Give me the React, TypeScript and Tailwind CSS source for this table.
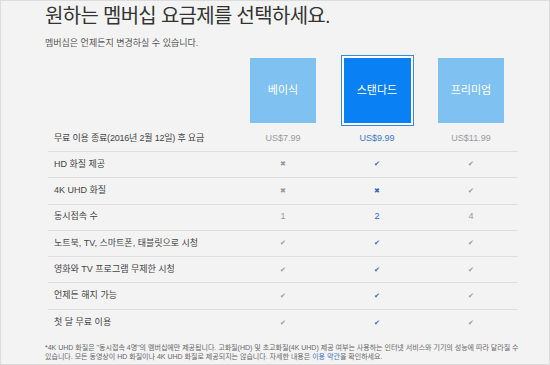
import React from "react";

type Cell = string | { icon: "check" | "x" };

const rows: { label: string; cells: Cell[] }[] = [
  { label: "HD 화질 제공", cells: [{ icon: "x" }, { icon: "check" }, { icon: "check" }] },
  { label: "4K UHD 화질", cells: [{ icon: "x" }, { icon: "x" }, { icon: "check" }] },
  { label: "동시접속 수", cells: ["1", "2", "4"] },
  { label: "노트북, TV, 스마트폰, 태블릿으로 시청", cells: [{ icon: "check" }, { icon: "check" }, { icon: "check" }] },
  { label: "영화와 TV 프로그램 무제한 시청", cells: [{ icon: "check" }, { icon: "check" }, { icon: "check" }] },
  { label: "언제든 해지 가능", cells: [{ icon: "check" }, { icon: "check" }, { icon: "check" }] },
  { label: "첫 달 무료 이용", cells: [{ icon: "check" }, { icon: "check" }, { icon: "check" }] },
];

function CellValue({ value, active }: { value: Cell; active: boolean }) {
  const color = active ? "text-[#3469b8]" : "text-[#999999]";
  if (typeof value === "string") {
    return <span className={`text-[9px] ${color}`}>{value}</span>;
  }
  return (
    <span className={`text-[7px] ${color}`}>{value.icon === "check" ? "✔" : "✖"}</span>
  );
}

export default function App() {
  return (
    <div
      className="w-[550px] h-[365px] overflow-hidden bg-[#f3f3f3] border border-[#dddddd] text-[#333]"
      style={{ fontFamily: '"Liberation Sans", "Noto Sans CJK KR", sans-serif' }}
    >
      <div className="pl-[44px] pt-[2px]">
        {/* Title */}
        <h1 className="text-[20px] leading-[26px] tracking-[-0.7px] text-[#333] font-normal">
          원하는 멤버십 요금제를 선택하세요.
        </h1>
        <p className="mt-[8px] text-[9px] leading-[12px] text-[#555]">
          멤버십은 언제든지 변경하실 수 있습니다.
        </p>

        {/* Plan table */}
        <div className="mt-[6px] ml-[3px] w-[470px]">
          <div className="flex h-[71px]">
            <div className="w-[188px]" />
            <div className="w-[94px] flex items-center justify-center">
              <div className="w-[66px] h-[65px] bg-[#7fc1f1] flex items-center justify-center text-white text-[11px]">
                베이식
              </div>
            </div>
            <div className="w-[94px] flex items-center justify-center">
              <div className="w-[73px] h-[71px] border border-[#3a8ad8] bg-white p-[2px]">
                <div className="w-full h-full bg-[#0a80f5] flex items-center justify-center text-white text-[11px]">
                  스탠다드
                </div>
              </div>
            </div>
            <div className="w-[94px] flex items-center justify-center">
              <div className="w-[66px] h-[65px] bg-[#7fc1f1] flex items-center justify-center text-white text-[11px]">
                프리미엄
              </div>
            </div>
          </div>

          {/* Price row */}
          <div className="flex h-[26px] items-center border-b border-[#dedede]">
            <div className="w-[188px] pl-[6px] text-[9px] tracking-[-0.2px] text-[#444]">무료 이용 종료(2016년 2월 12일) 후 요금</div>
            <div className="w-[94px] text-center text-[9px] text-[#9a9a9a]">US$7.99</div>
            <div className="w-[94px] text-center text-[9px] text-[#3d78c4]">US$9.99</div>
            <div className="w-[94px] text-center text-[9px] text-[#9a9a9a]">US$11.99</div>
          </div>

          {rows.map((row, i) => (
            <div
              key={row.label}
              className={`flex h-[26.3px] items-center ${i < rows.length - 1 ? "border-b border-[#dedede]" : ""}`}
            >
              <div className="w-[188px] pl-[6px] text-[9px] text-[#444]">{row.label}</div>
              {row.cells.map((c, j) => (
                <div key={j} className="w-[94px] flex justify-center">
                  <CellValue value={c} active={j === 1} />
                </div>
              ))}
            </div>
          ))}
        </div>

        {/* Footnote */}
        <p className="mt-[7px] text-[7px] leading-[9px] text-[#666] pr-[20px]">
          *4K UHD 화질은 "동시접속 4명"의 멤버십에만 제공됩니다. 고화질(HD) 및 초고화질(4K UHD) 제공 여부는 사용하는 인터넷 서비스와 기기의 성능에 따라 달라질 수
          <br />
          있습니다. 모든 동영상이 HD 화질이나 4K UHD 화질로 제공되지는 않습니다. 자세한 내용은 <span className="text-[#3d78c4]">이용 약관</span>을 확인하세요.
        </p>
      </div>
    </div>
  );
}
